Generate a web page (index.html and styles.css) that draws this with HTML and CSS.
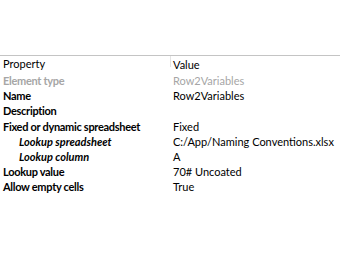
FILE: index.html
```html
<!DOCTYPE html>
<html lang="en">
<head>
    <meta charset="UTF-8">
    <title>Properties</title>
    <link rel="stylesheet" href="styles.css">
</head>
<body>
    <div class="grid">
        <div class="head prop">Property</div>
        <div class="head val">Value</div>

        <div class="prop muted">Element type</div>
        <div class="val muted">Row2Variables</div>

        <div class="prop">Name</div>
        <div class="val">Row2Variables</div>

        <div class="prop">Description</div>
        <div class="val"></div>

        <div class="prop">Fixed or dynamic spreadsheet</div>
        <div class="val">Fixed</div>

        <div class="prop sub">Lookup spreadsheet</div>
        <div class="val">C:/App/Naming Conventions.xlsx</div>

        <div class="prop sub">Lookup column</div>
        <div class="val">A</div>

        <div class="prop">Lookup value</div>
        <div class="val">70# Uncoated</div>

        <div class="prop">Allow empty cells</div>
        <div class="val">True</div>
    </div>
</body>
</html>
```

FILE: styles.css
```css
body {
    margin: 0;
    padding-top: 55px;
    background: #ffffff;
    font-family: Lato, sans-serif;
    font-size: 11px;
    color: #000000;
}
.grid {
    display: grid;
    grid-template-columns: 170px 1fr;
    grid-template-rows: 17px;
    grid-auto-rows: 15.2px;
    border-top: 1px solid #c4c4c4;
}
.grid > div {
    line-height: 15px;
    white-space: nowrap;
}
.prop {
    padding-left: 3px;
    font-weight: bold;
    letter-spacing: -0.3px;
}
.val {
    padding-left: 3px;
}
.head {
    font-weight: normal;
    letter-spacing: 0;
    line-height: 17px;
}
.head.val {
    align-self: start;
    border-left: 1px solid #e4e4e4;
    padding-left: 2px;
    height: 11px;
    line-height: 17px;
}
.muted {
    color: #a6a6a6;
}
.sub {
    padding-left: 19px;
    font-style: italic;
    letter-spacing: 0;
}
```
